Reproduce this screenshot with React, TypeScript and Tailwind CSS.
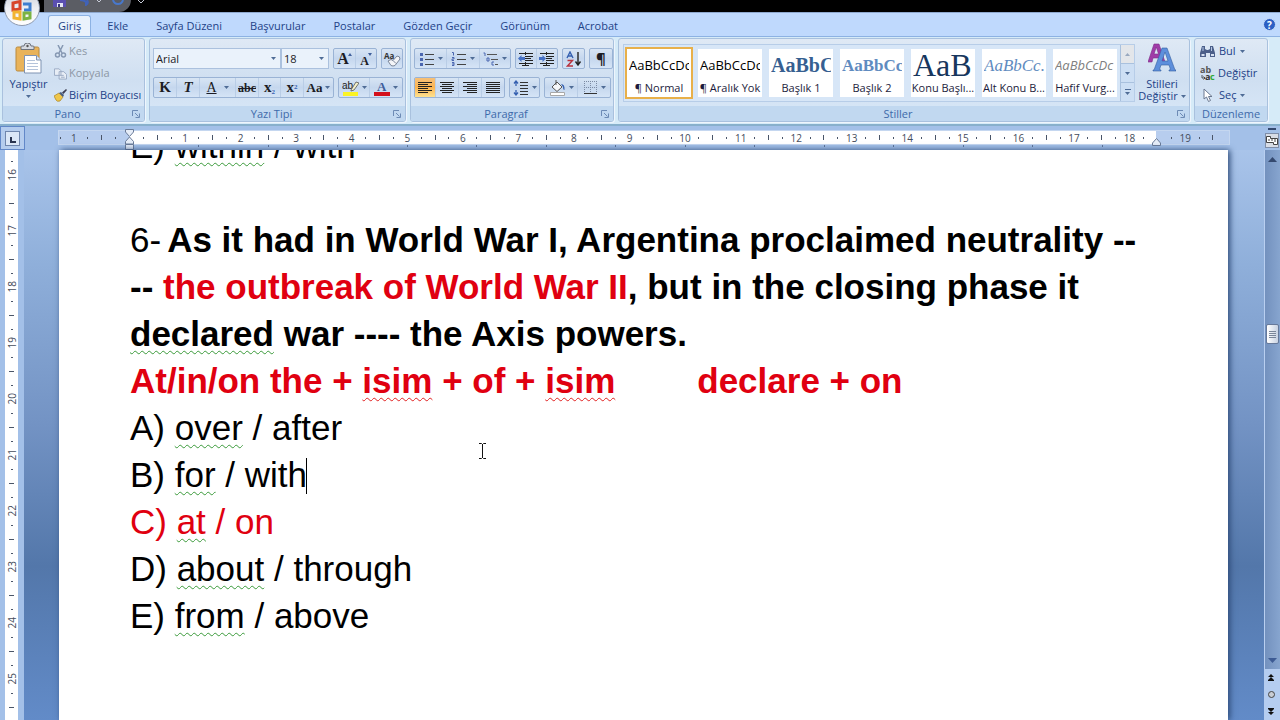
import { useState, type ReactNode } from 'react';

const TABS = ['Giriş', 'Ekle', 'Sayfa Düzeni', 'Başvurular', 'Postalar', 'Gözden Geçir', 'Görünüm', 'Acrobat'];

const SERIF = "font-['Liberation_Serif',serif]";

const STYLES = [
  { name: '¶ Normal', sample: 'AaBbCcDc', look: 'text-[13px] text-black' },
  { name: '¶ Aralık Yok', sample: 'AaBbCcDc', look: 'text-[13px] text-black' },
  { name: 'Başlık 1', sample: 'AaBbCc', look: `${SERIF} text-[20px] font-bold text-[#365f91]` },
  { name: 'Başlık 2', sample: 'AaBbCc', look: `${SERIF} text-[17px] font-bold text-[#5f8bc0]` },
  { name: 'Konu Başlı...', sample: 'AaB', look: `${SERIF} text-[32px] text-[#17365d]` },
  { name: 'Alt Konu B...', sample: 'AaBbCc.', look: `${SERIF} text-[17px] italic text-[#5f8bc0]` },
  { name: 'Hafif Vurg...', sample: 'AaBbCcDc', look: 'text-[13px] italic text-[#808080]' },
];

/** Small drop-down arrow */
function Arrow({ className = '' }: { className?: string }) {
  return (
    <svg viewBox="0 0 5 3" className={`h-[3px] w-[5px] shrink-0 ${className}`} aria-hidden="true">
      <path d="M0 0h5L2.5 3z" fill="#4f6c96" />
    </svg>
  );
}

/** Ribbon group with its caption strip */
function Group({
  title,
  className = '',
  launcher = true,
  children,
}: {
  title: string;
  className?: string;
  launcher?: boolean;
  children: ReactNode;
}) {
  return (
    <section
      className={`flex h-[84px] flex-col overflow-hidden rounded-[3px] border border-[#a9c1de] bg-gradient-to-b from-[#dfe9f5] via-[#cfdff1] to-[#d9e8f8] shadow-[1px_1px_0_#eef5fd] ${className}`}
    >
      <div className="flex min-h-0 flex-1">{children}</div>
      <div className="flex h-[15px] shrink-0 items-center bg-[#c1d8f0] text-[11px] leading-none text-[#3e6aaa]">
        <h2 className="flex-1 text-center">{title}</h2>
        {launcher && (
          <button aria-label={`${title} ayarları`} className="mr-1 h-2 w-2">
            <svg viewBox="0 0 8 8" className="h-2 w-2" fill="none" stroke="#6d8bb5">
              <path d="M.5 6V.5H6M3 3l3.5 3.5M7.5 3.500v4h-4" />
            </svg>
          </button>
        )}
      </div>
    </section>
  );
}

/** Outlined strip of joined buttons */
function Strip({ children }: { children: ReactNode }) {
  return (
    <div className="flex h-[21px] divide-x divide-[#b9cde6] rounded-[2px] border border-[#9ab3d5] bg-gradient-to-b from-[#d8e5f4] via-[#c5d7ee] to-[#d5e4f6]">
      {children}
    </div>
  );
}

function Tool({
  label,
  width,
  arrow,
  active,
  children,
}: {
  label: string;
  width: string;
  arrow?: boolean;
  active?: boolean;
  children: ReactNode;
}) {
  return (
    <button
      aria-label={label}
      className={`flex items-center justify-center gap-[3px] leading-none text-[#1c1c24] ${width} ${
        active ? 'bg-gradient-to-b from-[#f6c078] via-[#fbb450] to-[#fde290]' : ''
      }`}
    >
      {children}
      {arrow && <Arrow />}
    </button>
  );
}

function Lines({ rows }: { rows: [number, number][] }) {
  return (
    <svg viewBox="0 0 16 14" className="h-[14px] w-4" stroke="#222" strokeWidth="1">
      {rows.map(([a, b], i) => (
        <path key={i} d={`M${a} ${i * 2 + 1.5}H${b}`} />
      ))}
    </svg>
  );
}

function ListIcon({ kind }: { kind: 'bullet' | 'number' | 'multi' }) {
  return (
    <svg viewBox="0 0 16 14" className="h-[14px] w-4" fill="none">
      {kind === 'bullet' && (
        <>
          <path d="M1 1h3v3H1zM1 6h3v3H1zM1 11h3v3H1z" fill="#4a66b0" />
          <path d="M6 2.500h9M6 7.500h9M6 12.500h9" stroke="#444" />
        </>
      )}
      {kind === 'number' && (
        <>
          <path d="M1 .5h1.500v3M1 5.500h2v1.500H1v1.500h2M1 10.500h2v3H1M1 12h2" stroke="#4a66b0" />
          <path d="M6 2.500h9M6 7.500h9M6 12.500h9" stroke="#444" />
        </>
      )}
      {kind === 'multi' && (
        <>
          <path d="M.5 1h1.500v3M4 6h2v3H4zM9 10h2M9 10v3h2" stroke="#4a66b0" />
          <path d="M4 2.500h10M8 7.500h7M12 12.500h3" stroke="#555" />
        </>
      )}
    </svg>
  );
}

function IndentIcon({ flip }: { flip?: boolean }) {
  return (
    <svg viewBox="0 0 16 14" className="h-[14px] w-4" fill="none">
      <path d="M1 1.500h14M8 4.500h7M8 6.500h5M8 8.500h7M1 11.500h14M4 13.500h7" stroke="#222" />
      <path d={flip ? 'M7 6.500L3.500 3v2H0v3h3.500v2z' : 'M0 6.500L3.500 3v2H7v3H3.500v2z'} fill="#4570c4" />
      <path d="M7.500 0v14" stroke="#222" strokeDasharray="1 1" />
    </svg>
  );
}

function PasteIcon() {
  return (
    <svg viewBox="0 0 27 31" className="h-[31px] w-[27px]" aria-hidden="true">
      <rect x="1" y="4" width="23" height="24" rx="1.500" fill="#e9b35a" stroke="#b98a3e" />
      <path d="M6 6.500V4q0-1 1-1h2q0-3 3.500-3T16 3h2q1 0 1 1v2.500z" fill="#d5d9e0" stroke="#6d737e" />
      <circle cx="12.500" cy="3" r="1.200" fill="#555" />
      <path d="M9.500 12.500h12l4.500 4.500v13h-16.500z" fill="#fff" stroke="#7f93b2" />
      <path d="M21.500 12.500V17H26" fill="#dbe5f3" stroke="#7f93b2" />
      <path d="M12 17.500h8M12 20.500h11M12 23.500h11M12 26.500h11" stroke="#b4c3da" />
    </svg>
  );
}

function Clipboard() {
  return (
    <Group title="Pano" className="w-[143px]">
      <button className="flex w-[51px] shrink-0 flex-col items-center pt-[4px] text-[11px] leading-none text-[#1e4287]">
        <PasteIcon />
        <span className="mt-1">Yapıştır</span>
        <Arrow className="mt-[6px]" />
      </button>
      <div className="flex flex-col gap-[2px] pt-[2px] text-[11px] leading-5">
        <button className="flex h-5 items-center gap-[2px] text-[#8d97a5]">
          <svg viewBox="0 0 13 13" className="h-[13px] w-[13px]" fill="none" stroke="#8799b3" strokeWidth="1.500">
            <path d="M4 0l4 8M9 0L5 8" />
            <circle cx="3.500" cy="10" r="2" />
            <circle cx="9.500" cy="10" r="2" />
          </svg>
          Kes
        </button>
        <button className="flex h-5 items-center gap-[2px] text-[#8d97a5]">
          <svg viewBox="0 0 14 13" className="h-[13px] w-[13px]" fill="#e8eef6" stroke="#98a9c2">
            <path d="M.5 1.500h5l2 2v5h-7zM5.500 4.500h5l3 3v5h-8z" />
            <path d="M7.500 8.500h3M7.500 10.500h4" />
          </svg>
          Kopyala
        </button>
        <button className="flex h-5 items-center gap-[2px] whitespace-nowrap text-[#1e4287]">
          <svg viewBox="0 0 13 13" className="h-[13px] w-[13px]">
            <path d="M0 7l5-3 4 4-3 4q-3 1-4-1z" fill="#efc64a" stroke="#a98322" strokeWidth=".7" />
            <path d="M5 4l2-1 3 3-1 2z" fill="#4a5f80" />
            <path d="M8 3.500L12 0l1 1-3.500 4z" fill="#3c3c50" />
          </svg>
          Biçim Boyacısı
        </button>
      </div>
    </Group>
  );
}

function FontGroup() {
  return (
    <Group title="Yazı Tipi" className="w-[257px]">
      <div className="flex flex-col gap-2 px-[3px] pt-[9px]">
        <div className="flex h-[21px] gap-1">
          <div className="flex">
            {[
              { label: 'Yazı tipi', value: 'Arial', w: 'w-32' },
              { label: 'Yazı tipi boyutu', value: '18', w: 'w-12' },
            ].map((f) => (
              <div key={f.label} className={`relative flex items-center ${f.w}`}>
                <select
                  aria-label={f.label}
                  className="h-full w-full appearance-none border border-[#abc1de] bg-[#eaf2fb] pl-[2px] text-[11px] leading-none text-[#1c1c24]"
                >
                  <option>{f.value}</option>
                </select>
                <Arrow className="pointer-events-none absolute right-[5px]" />
              </div>
            ))}
          </div>
          <Strip>
            <Tool label="Yazı tipini büyüt" width="w-[22px]">
              <span className={`text-[16px] font-bold ${SERIF}`}>A</span>
              <svg viewBox="0 0 4 3" className="-ml-1 mb-2 h-[3px] w-1"><path d="M0 3L2 0l2 3z" fill="#3f5f9c" /></svg>
            </Tool>
            <Tool label="Yazı tipini küçült" width="w-5">
              <span className={`pt-1 text-[12px] font-bold ${SERIF}`}>A</span>
              <svg viewBox="0 0 4 3" className="-ml-1 mb-2 h-[3px] w-1"><path d="M0 0h4L2 3z" fill="#3f5f9c" /></svg>
            </Tool>
          </Strip>
          <Strip>
            <Tool label="Biçimlendirmeyi temizle" width="w-5">
              <svg viewBox="0 0 18 16" className="h-4 w-[18px]">
                <text x="1" y="8" fontSize="8" fontWeight="700" fill="#333" fontFamily="Open Sans, sans-serif">Aa</text>
                <path d="M5 10l3-1.500 2 1 4-4.500q3 0 3 3l-5 6.500q-2 1-4 0z" fill="#f4f5f8" stroke="#7a8598" />
                <path d="M10 9.500l3 3" stroke="#7a8598" />
              </svg>
            </Tool>
          </Strip>
        </div>
        <div className={`flex gap-1 ${SERIF}`}>
          <Strip>
            <Tool label="Kalın" width="w-[23px]"><b className="text-[15px]">K</b></Tool>
            <Tool label="İtalik" width="w-[23px]"><b className="text-[15px] italic">T</b></Tool>
            <Tool label="Altı çizili" width="w-9" arrow><span className="pr-1 text-[14px] underline">A</span></Tool>
            <Tool label="Üstü çizili" width="w-[23px]"><b className="text-[12px] line-through">abc</b></Tool>
            <Tool label="Alt simge" width="w-[22px]"><span className="text-[15px] font-bold">x<sub className="text-[7px] text-[#3560b0]">2</sub></span></Tool>
            <Tool label="Üst simge" width="w-[23px]"><span className="text-[15px] font-bold">x<sup className="text-[7px] text-[#3560b0]">2</sup></span></Tool>
            <Tool label="Büyük/küçük harf" width="w-[29px]" arrow><b className="text-[13px]">Aa</b></Tool>
          </Strip>
          <Strip>
            <Tool label="Vurgu rengi" width="w-[31px]" arrow>
              <svg viewBox="0 0 17 16" className="h-4 w-[17px]">
                <path d="M1 12h15v4H1z" fill="#fbf326" />
                <text x="0" y="9" fontSize="10" fill="#222" fontFamily="Liberation Sans, sans-serif">ab</text>
                <path d="M9 10l5-8 3 1-5 7-3 1z" fill="#f4f0c8" stroke="#555" strokeWidth=".8" />
              </svg>
            </Tool>
            <Tool label="Yazı tipi rengi" width="w-8" arrow>
              <svg viewBox="0 0 16 16" className="h-4 w-4">
                <path d="M0 12h16v4H0z" fill="#d4101c" />
                <text x="3" y="11" fontSize="13" fontWeight="700" fill="#3f5f9c" fontFamily="Liberation Serif, serif">A</text>
              </svg>
            </Tool>
          </Strip>
        </div>
      </div>
    </Group>
  );
}

function ParagraphGroup() {
  return (
    <Group title="Paragraf" className="w-[204px]">
      <div className="flex flex-col gap-2 px-[3px] pt-[9px]">
        <div className="flex gap-1">
          <Strip>
            <Tool label="Madde işaretleri" width="w-8" arrow><ListIcon kind="bullet" /></Tool>
            <Tool label="Numaralandırma" width="w-[33px]" arrow><ListIcon kind="number" /></Tool>
            <Tool label="Çok düzeyli liste" width="w-[30px]" arrow><ListIcon kind="multi" /></Tool>
          </Strip>
          <Strip>
            <Tool label="Girintiyi azalt" width="w-[21px]"><IndentIcon /></Tool>
            <Tool label="Girintiyi artır" width="w-5"><IndentIcon flip /></Tool>
          </Strip>
          <Strip>
            <Tool label="Sırala" width="w-[21px]">
              <svg viewBox="0 0 16 16" className="h-4 w-4" fill="none">
                <path d="M1 7L4 1l3 6M2 5h4" stroke="#3560b0" strokeWidth="1.400" />
                <path d="M1.500 9.500h5L1.500 15h5.500" stroke="#b8323e" strokeWidth="1.400" />
                <path d="M12 1v12M9.500 10.500L12 14l2.500-3.500" stroke="#222" strokeWidth="1.400" />
              </svg>
            </Tool>
          </Strip>
          <Strip>
            <Tool label="Paragraf işaretleri" width="w-[22px]"><b className="text-[15px]">¶</b></Tool>
          </Strip>
        </div>
        <div className="flex gap-1">
          <Strip>
            <Tool label="Sola hizala" width="w-[21px]" active><Lines rows={[[1, 15], [1, 11], [1, 15], [1, 11], [1, 15], [1, 11]]} /></Tool>
            <Tool label="Ortala" width="w-[23px]"><Lines rows={[[1, 15], [3, 13], [1, 15], [3, 13], [1, 15], [3, 13]]} /></Tool>
            <Tool label="Sağa hizala" width="w-[23px]"><Lines rows={[[1, 15], [5, 15], [1, 15], [5, 15], [1, 15], [5, 15]]} /></Tool>
            <Tool label="İki yana yasla" width="w-[22px]"><Lines rows={[[1, 15], [1, 15], [1, 15], [1, 15], [1, 15], [1, 15]]} /></Tool>
          </Strip>
          <Strip>
            <Tool label="Satır aralığı" width="w-[29px]" arrow>
              <svg viewBox="0 0 16 16" className="h-4 w-4" fill="none">
                <path d="M3 1v5M1 3.500L3 1l2 2.500M3 10v5M1 12.500L3 15l2-2.500" stroke="#3560b0" strokeWidth="1.300" />
                <path d="M7 2.500h8M7 5.500h8M7 8.500h8M7 11.500h8M7 14.500h8" stroke="#333" />
              </svg>
            </Tool>
          </Strip>
          <Strip>
            <Tool label="Gölgelendirme" width="w-[33px]" arrow>
              <svg viewBox="0 0 17 16" className="h-4 w-[17px]">
                <path d="M3 7l5-5 5 5-5 4.500z" fill="#f5f7fa" stroke="#555" />
                <path d="M7 5V0" stroke="#555" />
                <path d="M12 4q4 0 3.500 6-1.500 0-1.500-3z" fill="#3560b0" />
                <path d="M1.500 12.500h14v3h-14z" fill="#fff" stroke="#a8a8a8" />
              </svg>
            </Tool>
            <Tool label="Kenarlıklar" width="w-8" arrow>
              <svg viewBox="0 0 15 15" className="h-[15px] w-[15px]" fill="none">
                <path d="M1.500 1v13M7.500 1v13M13.500 1v13M1 1.500h13M1 7.500h13" stroke="#7b8aa3" strokeDasharray="1 1" />
                <path d="M1 13.500h13" stroke="#333" />
              </svg>
            </Tool>
          </Strip>
        </div>
      </div>
    </Group>
  );
}

function StylesGroup() {
  return (
    <Group title="Stiller" className="min-w-0 flex-1">
      <div className="ml-[4px] mt-[5px] flex h-[58px] border border-[#b7cde8] bg-[#d7e6f7]">
        <div className="flex items-center gap-[7px] overflow-hidden px-[3px]">
          {STYLES.map((s, i) => (
            <button
              key={s.name}
              className={`flex h-12 w-16 shrink-0 flex-col items-center overflow-hidden bg-white text-[11px] text-[#1c1c3c] ${
                i === 0 ? 'outline-2 outline-[#e8b04a]' : ''
              }`}
            >
              <span className={`flex h-8 w-[60px] items-center overflow-hidden whitespace-nowrap leading-none ${s.look}`}>
                {s.sample}
              </span>
              <span className="whitespace-nowrap leading-[14px]">{s.name}</span>
            </button>
          ))}
        </div>
        <div className="flex w-[14px] shrink-0 flex-col divide-y divide-[#a9c1de] border-l border-[#a9c1de] bg-[#cddff4]">
          <button aria-label="Yukarı" className="flex flex-1 items-center justify-center bg-[#e3e6ea]">
            <Arrow className="rotate-180 opacity-50" />
          </button>
          <button aria-label="Aşağı" className="flex flex-1 items-center justify-center"><Arrow /></button>
          <button aria-label="Tüm stiller" className="flex flex-1 flex-col items-center justify-center gap-[2px]">
            <span className="h-px w-[6px] bg-[#4f6c96]" />
            <Arrow />
          </button>
        </div>
      </div>
      <button className="flex flex-1 flex-col items-center pt-[4px] text-[11px] leading-3 text-[#1e4287]">
        <svg viewBox="0 0 28 29" className="h-[29px] w-7" aria-hidden="true">
          <path d="M0 19L6 1h5l6 18h-4.500l-1-4H5l-1 4zM6 11h4.500L8.300 4z" fill="#a03ba8" stroke="#7c2c86" strokeWidth=".6" />
          <path d="M6 27L14 5h5l8 22h1v1h-7v-1l1.500-.5-1.500-4.500h-8l-1.500 4.500 1.500.5v1H5v-1zM14 18h6l-3-9z" fill="#5d8fdc" stroke="#35609f" strokeWidth=".6" />
        </svg>
        <span className="mt-[6px]">Stilleri</span>
        <span className="flex items-center gap-[3px]">Değiştir <Arrow /></span>
      </button>
    </Group>
  );
}

function EditGroup() {
  return (
    <Group title="Düzenleme" className="w-[74px]" launcher={false}>
      <div className="flex flex-col gap-[2px] pl-[5px] pt-[2px] text-[11px] text-[#1e4287]">
        <button className="flex h-5 items-center gap-1">
          <svg viewBox="0 0 15 13" className="h-[13px] w-[15px]">
            <path d="M2 1h3v3l2 1h1l2-1V1h3l2 7v4h-5V8H6v4H0V8z" fill="#4b5f8a" />
            <path d="M1.500 9h3v2h-3zM11 9h3v2h-3z" fill="#d7e1f2" />
            <path d="M3 2v4M11.500 2v4" stroke="#b6c7e4" />
          </svg>
          Bul <Arrow />
        </button>
        <button className="flex h-5 items-center gap-[3px]">
          <svg viewBox="0 0 15 15" className="h-[15px] w-[15px] shrink-0" fontFamily="Open Sans, sans-serif" fontWeight="700">
            <text x="0" y="7" fontSize="9" fill="#555">ab</text>
            <text x="5" y="14" fontSize="9" fill="#333">a</text>
            <text x="10" y="14" fontSize="9" fill="#2ea836">c</text>
            <path d="M2 9v3h3M3.500 10.500L5 12l-1.500 1.500" fill="none" stroke="#333" strokeWidth=".8" />
          </svg>
          Değiştir
        </button>
        <button className="flex h-5 items-center gap-1">
          <svg viewBox="0 0 15 14" className="h-[14px] w-[15px]">
            <path d="M4 1l8 7.500H8.500l2 4-2 1-2-4.500L4 11z" fill="#fff" stroke="#6a7890" />
          </svg>
          Seç <Arrow />
        </button>
      </div>
    </Group>
  );
}

function OfficeButton() {
  return (
    <button
      aria-label="Office düğmesi"
      className="absolute -top-[10px] left-1 z-10 flex h-9 w-9 items-center justify-center rounded-full border border-[#8f9aae] bg-gradient-to-b from-[#c9ced8] via-[#eceef3] to-white"
    >
      <svg viewBox="0 0 24 24" className="mt-1 h-6 w-6" fill="none" strokeWidth="3">
        <path d="M10 11V3.500L3 5v7z" stroke="#d8452a" />
        <path d="M13 6h7v6h-6" stroke="#3f7ed0" />
        <path d="M4 14h6v7l-6-1z" stroke="#f2b430" />
        <path d="M14 15h6v5l-6 1z" stroke="#7bb342" />
      </svg>
    </button>
  );
}

function TitleBar() {
  return (
    <header className="relative h-3 shrink-0 bg-black">
      <OfficeButton />
      <div className="ml-11 flex h-3 w-[87px] items-start gap-[14px] overflow-hidden rounded-br-xl bg-[#5b5d64] pl-[9px]">
        <svg viewBox="0 0 13 7" className="h-[7px] w-[13px]">
          <path d="M0 0h13v7H0z" fill="#5a4fb0" />
          <path d="M4 3h6v4H4z" fill="#e4e6f4" />
          <path d="M5 4h2v3H5z" fill="#3a3480" />
        </svg>
        <svg viewBox="0 0 22 6" className="h-[6px] w-[22px]" fill="none">
          <path d="M0 0q4 0 6 2v3q3-2 1-5" stroke="#4062b8" strokeWidth="2" />
          <path d="M17 0l2 2 2-2" stroke="#c8ccd8" />
        </svg>
        <svg viewBox="0 0 12 6" className="-ml-1 h-[6px] w-3" fill="none">
          <path d="M1 0q1 4 5 4t5-4" stroke="#4878cc" strokeWidth="2" />
        </svg>
      </div>
      <svg viewBox="0 0 6 3" className="absolute left-[138px] top-0 h-[3px] w-[6px]">
        <path d="M0 0l3 3 3-3" fill="none" stroke="#c8ccd8" />
      </svg>
    </header>
  );
}

function TabBar({ active, onSelect }: { active: string; onSelect: (tab: string) => void }) {
  return (
    <nav className="flex h-6 shrink-0 items-end border-t border-[#8fa9cf] bg-[#bfd9fd] pl-12 text-[11px] text-[#1e4287]">
      {TABS.map((tab) => (
        <button
          key={tab}
          onClick={() => onSelect(tab)}
          className={`h-[21px] rounded-t-[3px] leading-[18px] ${
            tab === active ? 'mr-[2px] border border-b-0 border-[#8db2e3] bg-[#eaf2fc] px-[9px]' : 'px-[14px]'
          }`}
        >
          {tab}
        </button>
      ))}
      <button
        aria-label="Yardım"
        className="mb-[5px] ml-auto mr-1 flex h-[13px] w-[13px] items-center justify-center rounded-full border border-[#c8dcf8] bg-[#2c5fc4] text-[10px] font-bold leading-none text-white"
      >
        ?
      </button>
    </nav>
  );
}

/** Quarter-centimetre mark: number, long tick or dot */
function mark(q: number) {
  if (q % 4 === 0) return 'number';
  return q % 2 === 0 ? 'tick' : 'dot';
}

function HorizontalRuler() {
  // from -1.25 cm to 19.5 cm
  const quarters = Array.from({ length: 84 }, (_, i) => i - 5);
  return (
    <div className="flex h-6 bg-[#a3c0e8] pr-[15px]">
      <div className="flex h-6 w-[25px] items-center justify-center border border-[#6288c8] bg-[#b5cdee]">
        <button aria-label="Sekme türü" className="h-[15px] w-[15px] border border-[#6f86ad] bg-[#dbe7f7] pl-1 pt-[3px]">
          <span className="block h-[6px] w-[6px] border-b-2 border-l-2 border-[#2a3550]" />
        </button>
      </div>
      <div className="relative ml-[33px] mr-[35px] flex flex-1 flex-col pt-1">
        <div className="flex h-[15px] items-center justify-between border border-[#c5d7f0] bg-[linear-gradient(to_right,#b7cdee_70px,#fff_70px,#fff_calc(100%-73px),#b7cdee_calc(100%-73px))] pl-px pr-[15px] text-[10px] leading-none text-[#444c5c]">
          {quarters.map((q) => (
            <span key={q} className="flex w-0 items-center justify-center">
              {mark(q) === 'number' && q !== 0 && <span>{Math.abs(q / 4)}</span>}
              {mark(q) === 'tick' && q !== 74 && <span className="h-[5px] w-px shrink-0 bg-[#4a5568]" />}
              {mark(q) === 'dot' && <span className="h-[2px] w-px shrink-0 bg-[#4a5568]" />}
            </span>
          ))}
        </div>
        <div className="flex h-[3px] justify-between pl-[140px] pr-[127px]">
          {Array.from({ length: 14 }, (_, i) => (
            <span key={i} className="h-[2px] w-px bg-[#5f7599]" />
          ))}
        </div>
        <svg viewBox="0 0 9 21" className="absolute left-[67px] top-[3px] h-[21px] w-[9px]" fill="#e6edf8" stroke="#6b7c99">
          <path d="M.5.5h8V3l-4 4.500L.5 3zM4.500 8l4 4.500V15h-8v-2.500zM.5 15.500h8v5h-8z" />
        </svg>
        <svg viewBox="0 0 9 8" className="absolute right-[69px] top-3 h-2 w-[9px]" fill="#e6edf8" stroke="#6b7c99">
          <path d="M4.500.5l4 4.500v2.500h-8V5z" />
        </svg>
      </div>
    </div>
  );
}

function VerticalRuler() {
  // starts at 15.75 cm
  const quarters = Array.from({ length: 42 }, (_, i) => i + 63);
  return (
    <div className="w-6 shrink-0 overflow-hidden bg-[#a3c0e8] pl-[5px]">
      <div className="flex w-[13px] flex-col bg-white pt-1 text-[10px] leading-none text-[#444c5c]">
        {quarters.map((q) => (
          <span key={q} className="flex h-[14px] shrink-0 items-center justify-center">
            {mark(q) === 'number' && <span className="rotate-180 [writing-mode:vertical-rl]">{q / 4}</span>}
            {mark(q) === 'tick' && <span className="h-px w-[5px] bg-[#4a5568]" />}
            {mark(q) === 'dot' && <span className="h-px w-[2px] bg-[#4a5568]" />}
          </span>
        ))}
      </div>
    </div>
  );
}

function ScrollBar() {
  return (
    <div className="flex min-h-0 w-4 flex-1 flex-col items-center bg-[#b5cdf0]">
      <div className="flex w-full flex-1 flex-col items-center border-l border-[#b9cff0] bg-gradient-to-r from-[#7391be] to-[#87a5cf] py-[6px]">
        <button aria-label="Yukarı kaydır" className="flex h-[6px] items-center">
          <svg viewBox="0 0 9 5" className="h-[5px] w-[9px]"><path d="M0 5l4.500-5L9 5z" fill="#34496f" /></svg>
        </button>
        <div className="flex w-full flex-1 flex-col items-center">
          <div className="flex-[161_1_0%]" />
          <div className="flex h-5 w-[13px] flex-col items-center justify-center gap-px rounded-[2px] border border-[#66799a] bg-gradient-to-r from-white to-[#c8d2e2]">
            {[0, 1, 2, 3].map((n) => (
              <span key={n} className="h-px w-[7px] bg-[#7a8699]" />
            ))}
          </div>
          <div className="flex-[311_1_0%]" />
        </div>
        <button aria-label="Aşağı kaydır" className="flex h-[6px] items-center">
          <svg viewBox="0 0 9 5" className="h-[5px] w-[9px]"><path d="M0 0l4.500 5L9 0z" fill="#3d5b94" /></svg>
        </button>
      </div>
      <div className="flex h-[51px] shrink-0 flex-col items-center justify-between py-[5px] pr-[2px]">
        <button aria-label="Önceki sayfa">
          <svg viewBox="0 0 6 7" className="block h-[7px] w-[6px]"><path d="M0 3l3-3 3 3zM0 6l3-3 3 3v1H0z" fill="#111" /></svg>
        </button>
        <button aria-label="Gözatma nesnesi" className="h-[7px] w-[7px] rounded-full border border-[#444] bg-[#c9cdd4]" />
        <button aria-label="Sonraki sayfa">
          <svg viewBox="0 0 6 7" className="block h-[7px] w-[6px]"><path d="M0 0h6v1L3 4 0 1zM0 4h6L3 7z" fill="#111" /></svg>
        </button>
      </div>
    </div>
  );
}

/** Word with a proofing squiggle */
function Flag({ spelling, children }: { spelling?: boolean; children: ReactNode }) {
  return (
    <span
      className={`underline decoration-wavy decoration-1 underline-offset-[4px] [text-decoration-skip-ink:none] ${
        spelling ? 'decoration-[#e02020]' : 'decoration-[#3a9a3a]'
      }`}
    >
      {children}
    </span>
  );
}

function Page() {
  return (
    <article className="relative min-w-0 flex-1 overflow-hidden bg-white pl-[71px] font-['Liberation_Sans',Arial,sans-serif] text-[35px] leading-[47px] text-black shadow-[2px_0_6px_#2d4a78]">
      <div className="-mt-7 whitespace-nowrap">
        <p>E) <Flag>within</Flag> / with</p>
        <p className="h-[47px]" />
        <p>
          <span className="mr-[6px]">6-</span>
          <b>As it had in World War I, Argentina proclaimed neutrality --</b>
        </p>
        <p className="font-bold">
          -- <span className="text-[#e00010]">the outbreak of World War II</span>, but in the closing phase it
        </p>
        <p className="font-bold"><Flag>declared</Flag> war ---- the Axis powers.</p>
        <p className="flex gap-[82px] font-bold text-[#e00010]">
          <span>At/in/on the + <Flag spelling>isim</Flag> + of + <Flag spelling>isim</Flag></span>
          <span>declare + on</span>
        </p>
        <p>A) <Flag>over</Flag> / after</p>
        <p>B) <Flag>for</Flag> / with<span className="-ml-px inline-block h-9 w-px bg-black align-[-7px]" /></p>
        <p className="text-[#e00010]">C) <Flag>at</Flag> / on</p>
        <p>D) <Flag>about</Flag> / through</p>
        <p>E) <Flag>from</Flag> / above</p>
      </div>
      {/* mouse pointer */}
      <svg viewBox="0 0 7 16" className="absolute left-[420px] top-[293px] h-4 w-[7px]" fill="none" stroke="#111">
        <path d="M0 .5h2.500l1 1 1-1H7M3.500 1v14M0 15.500h2.500l1-1 1 1H7" />
      </svg>
    </article>
  );
}

export default function App() {
  const [tab, setTab] = useState('Giriş');

  return (
    <div className="flex h-screen flex-col overflow-hidden bg-[#a3c0e8] font-['Open_Sans','Noto_Sans',sans-serif]">
      <TitleBar />
      <TabBar active={tab} onSelect={setTab} />
      <div className="flex h-[90px] shrink-0 gap-1 border-b-2 border-t border-b-[#88b0cc] border-t-[#8db2e3] bg-[#d6ebf8] pl-[2px] pr-3 pt-px">
        <Clipboard />
        <FontGroup />
        <ParagraphGroup />
        <StylesGroup />
        <EditGroup />
      </div>
      <div className="flex min-h-0 flex-1">
        <div className="flex min-w-0 flex-1 flex-col">
          <div className="-mr-4"><HorizontalRuler /></div>
          <main className="flex min-h-0 flex-1">
            <VerticalRuler />
            <div className="flex min-w-0 flex-1 bg-[linear-gradient(to_bottom,#a9c4ea,#8fafda_20%,#7393c4_48%,#5377aa_73%,#628bc8)] pl-[35px] pr-9">
              <Page />
            </div>
          </main>
        </div>
        <div className="z-10 flex w-4 shrink-0 flex-col">
          <div className="flex h-6 shrink-0 flex-col items-center gap-[3px] pt-[2px]">
            <span className="h-[2px] w-2 bg-[#34496f]" />
            <button aria-label="Cetveli göster" className="flex h-[15px] w-[14px] items-center justify-center border border-[#7f8ea8] bg-[#d8dde6]">
              <svg viewBox="0 0 12 11" className="h-[11px] w-3" fill="#fff" stroke="#444">
                <path d="M.5 1.500h4v2h7v6h-4v-2h-7z" />
                <path d="M3 4v2M6 4v2M9 4v3" />
              </svg>
            </button>
          </div>
          <ScrollBar />
        </div>
      </div>
    </div>
  );
}
